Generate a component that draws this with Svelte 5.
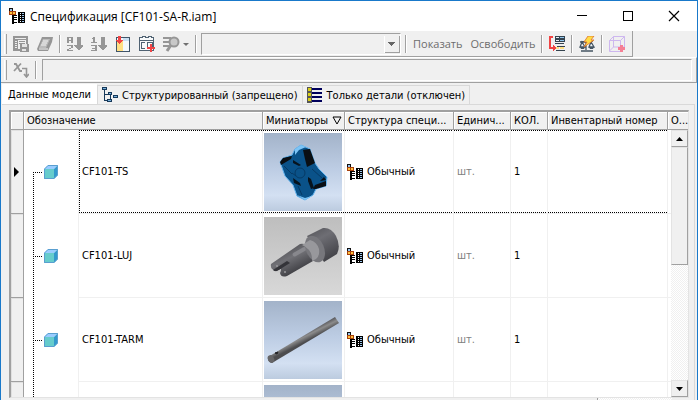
<script lang="ts">
interface Column {
	id: string;
	label: string;
	span?: number;
	sorted?: boolean;
}

interface Part {
	name: string;
	thumb: 'plate' | 'shaft' | 'rod' | 'blank';
	structure: string;
	unit: string;
	qty: string;
}

const columns: Column[] = [
	{ id: 'name', label: 'Обозначение', span: 2 },
	{ id: 'thumb', label: 'Миниатюры', sorted: true },
	{ id: 'structure', label: 'Структура специ...' },
	{ id: 'unit', label: 'Единич...' },
	{ id: 'qty', label: 'КОЛ.' },
	{ id: 'stock', label: 'Инвентарный номер' },
	{ id: 'desc', label: 'О...' },
];

const parts: Part[] = [
	{ name: 'CF101-TS', thumb: 'plate', structure: 'Обычный', unit: 'шт.', qty: '1' },
	{ name: 'CF101-LUJ', thumb: 'shaft', structure: 'Обычный', unit: 'шт.', qty: '1' },
	{ name: 'CF101-TARM', thumb: 'rod', structure: 'Обычный', unit: 'шт.', qty: '1' },
	{ name: '', thumb: 'blank', structure: '', unit: '', qty: '' },
];

let activeTab = $state('model');
let selected = $state(0);
</script>

{#snippet bomIcon()}
	<svg class="icon" viewBox="0 0 16 16" shape-rendering="crispEdges" aria-hidden="true">
		<rect width="4" height="4" fill="#111" />
		<rect x="1" y="1" width="2" height="2" fill="#9cc6ee" />
		<rect y="3" width="7" height="4" fill="#a8400c" />
		<rect x="1" y="4" width="5" height="2" fill="#ffc23c" />
		<rect x="3" y="4" width="1" height="2" fill="#a8400c" />
		<path d="M3 7h2v9h-2zM4 7h4v1h-4zM4 9h4v1h-4zM4 11h4v1h-4zM4 14h4v1h-4z" fill="#000" />
		<rect x="9" y="4" width="7" height="11" fill="#000" />
		<path d="M11 5h1v1h-1zM11 7h1v1h-1zM11 9h1v1h-1zM11 11h1v1h-1zM11 13h1v1h-1z" fill="#fff" />
		<path d="M13 5h2v1h-2zM13 7h2v1h-2zM13 9h2v1h-2zM13 11h2v1h-2zM13 13h2v1h-2z" fill="#9cc6ee" />
	</svg>
{/snippet}

{#snippet cubeIcon()}
	<svg class="cube" viewBox="0 0 14 14" aria-hidden="true">
		<path d="M0 4L4 0h10l-4 4z" fill="#99ccff" />
		<path d="M10 4l4-4v10l-4 4z" fill="#3399cc" />
		<rect x="0" y="4" width="10" height="10" fill="#66cccc" />
		<path d="M.5 4v9.500h9.500L13.500 10V.5H4L.5 4" fill="none" stroke="#5a9fd0" />
	</svg>
{/snippet}

{#snippet thumbnail(kind: Part['thumb'])}
	<svg class="thumb" viewBox="0 0 78 78" aria-hidden="true">
		<defs>
			<linearGradient id="sky" x1="0" y1="0" x2="0" y2="1">
				<stop offset="0" stop-color="#a3b3c9" />
				<stop offset=".45" stop-color="#bccce3" />
				<stop offset=".8" stop-color="#d3e0f2" />
				<stop offset="1" stop-color="#bccbdf" />
			</linearGradient>
			<linearGradient id="fog" x1="0" y1="0" x2="0" y2="1">
				<stop offset="0" stop-color="#bebebe" />
				<stop offset="1" stop-color="#d8d8d8" />
			</linearGradient>
			<linearGradient id="steel" gradientUnits="userSpaceOnUse" x1="50" y1="12" x2="68" y2="44">
				<stop offset="0" stop-color="#5a5a5f" />
				<stop offset=".3" stop-color="#6e6e74" />
				<stop offset="1" stop-color="#3e3e43" />
			</linearGradient>
			<linearGradient id="stem" gradientUnits="userSpaceOnUse" x1="26" y1="32" x2="36" y2="52">
				<stop offset="0" stop-color="#5c5c61" />
				<stop offset=".35" stop-color="#717176" />
				<stop offset="1" stop-color="#434348" />
			</linearGradient>
			<linearGradient id="bar" gradientUnits="userSpaceOnUse" x1="35" y1="34" x2="39" y2="42">
				<stop offset="0" stop-color="#56565a" />
				<stop offset=".45" stop-color="#8c8c8c" />
				<stop offset="1" stop-color="#4c4c4e" />
			</linearGradient>
		</defs>
		<rect width="78" height="78" fill={kind === 'shaft' ? 'url(#fog)' : 'url(#sky)'} />
		{#if kind === 'plate'}
			<path
				d="M16 29l3-4 9-3 3-6 6-4 9 4 5 14 4 6 8 8-1 9-10 3-3 6-8 5-8-4-4-11-8-9z"
				fill="#0a5289"
				stroke="#64b4ee"
				stroke-width="1"
			/>
			<path d="M31 16l6-4 5 2-7 3-4 5zM33 62l8 5 7-4-7 2z" fill="#7cc4f6" />
			<path d="M39 17l7-1 5 14-8 4-2-8z" fill="#0a0f14" />
			<path d="M16 29l3-4 9-2-1 3-10 6zM49 56l2-4 11-4v5l-10 3zM60 44l2 3-6 1z" fill="#0a0f14" />
			<path d="M29 27l8 5-2 1-6-3zM29 45l7 5 1 3-7-3zM44 44l3 2 3 9-3 1-3-8z" fill="#07131d" />
			<circle cx="36" cy="40" r="5" fill="none" stroke="#063a65" stroke-width="1" />
			<path d="M20 33l8 8M34 53l4 9M48 36l10 9M28 40l4 3" stroke="#063a65" stroke-width="1" />
		{:else if kind === 'shaft'}
			<path d="M7 47L36 27q7-1 11 5t2 12L23 59q-6 2-7-3l1-4-5 2q-6-1-5-7z" fill="url(#stem)" />
			<path d="M9 53l14-9 3 2-8 5-4 3q-3 1-5-1z" fill="#343439" />
			<path d="M11 55l6-3-1 4z" fill="#cacaca" />
			<rect x="28" y="33" width="15" height="4" rx="2" transform="rotate(-29 35 35)" fill="#88888d" />
			<circle cx="13" cy="49" r="1" fill="#9a9a9d" />
			<circle cx="21" cy="55" r="1" fill="#9a9a9d" />
			<path d="M43 19L59 11q8-1 13 8 5 10 1 18L60 45z" fill="url(#steel)" />
			<ellipse cx="51" cy="32" rx="9" ry="14" transform="rotate(-24 51 32)" fill="#77777c" />
			<path d="M38 28l8-5q7 2 9 9 1 7-3 10l-4 2q1-11-10-16z" fill="#98989c" />
		{:else if kind === 'rod'}
			<path d="M4 56L71 16l4 6L8 62q-5-1-4-6z" fill="url(#bar)" />
			<ellipse cx="7" cy="58" rx="3" ry="4" transform="rotate(-30 7 58)" fill="#666668" />
			<path d="M11 52l3-1-1 2z" fill="#242426" stroke="#242426" />
		{/if}
	</svg>
{/snippet}

<div class="window">
	<header class="titlebar">
		{@render bomIcon()}
		<h1>Спецификация [CF101-SA-R.iam]</h1>
		<button class="caption" aria-label="Свернуть">
			<svg viewBox="0 0 12 12" shape-rendering="crispEdges"><path d="M1 5h10v1h-10z" /></svg>
		</button>
		<button class="caption" aria-label="Развернуть">
			<svg viewBox="0 0 12 12"><rect x="1.500" y="1.500" width="9" height="9" fill="none" stroke="#000" /></svg>
		</button>
		<button class="caption" aria-label="Закрыть">
			<svg viewBox="0 0 12 12"><path d="M1 1l10 10M11 1L1 11" stroke="#000" stroke-width="1.200" /></svg>
		</button>
	</header>

	<div class="toolbar-row">
		<div class="toolbar" role="toolbar" aria-label="Спецификация">
			<span class="grip"></span>
			<button class="tool" disabled aria-label="Экспорт">
				<svg class="icon" viewBox="0 0 16 16" shape-rendering="crispEdges">
					<path d="M0 0h15v8h-2v-4h-12v9h6v2h-7z" fill="#969696" />
					<path d="M1 4h4v9h-4z" fill="#969696" />
					<path d="M2 5h2v1h-2zM2 7h2v1h-2zM2 9h2v1h-2zM2 11h2v1h-2zM2 2h11v1h-11z" fill="#eee" />
					<path d="M6 5h6v1h-6zM6 7h6v1h-6zM7 8h9v8h-9z" fill="#969696" />
					<path d="M9 8h5v3h-5zM9 13h4v2h-4z" fill="#e4e4e4" />
				</svg>
			</button>
			<button class="tool" disabled aria-label="Параметры">
				<svg class="icon" viewBox="0 0 16 16">
					<path d="M5 1h11l-1 5-4 9H1l-1-2z" fill="#969696" />
					<path d="M6 3h7l-4 9H2z" fill="#bcbcbc" />
					<path d="M6 5h5M5 7h5M4 9h5M2 13h9" stroke="#f4f4f4" />
				</svg>
			</button>
			<span class="divider"></span>
			<button class="tool" disabled aria-label="Сортировка">
				<svg class="icon" viewBox="0 0 16 16" shape-rendering="crispEdges">
					<path d="M1 1h4v1h-4zM0 1h2v6h-2zM4 1h2v6h-2zM1 4h4v1h-4zM0 9h6v1h-6zM4 10h2v2h-2zM2 12h2v1h-2zM0 13h2v2h-2zM0 14h6v1h-6z" fill="#969696" />
					<path d="M10 1h4v8h3l-5 6-5-6h3z" fill="#969696" />
				</svg>
			</button>
			<button class="tool" disabled aria-label="Перенумеровать">
				<svg class="icon" viewBox="0 0 16 16" shape-rendering="crispEdges">
					<path d="M2 1h2v5h-2zM1 2h2v1h-2zM0 6h6v1h-6zM0 9h6v1h-6zM4 9h2v6h-2zM1 12h4v1h-4zM0 14h6v1h-6z" fill="#969696" />
					<path d="M10 1h4v8h3l-5 6-5-6h3z" fill="#969696" />
				</svg>
			</button>
			<button class="tool" aria-label="Выбор столбцов">
				<svg class="icon" viewBox="0 0 16 16" shape-rendering="crispEdges">
					<rect x="1.500" y="1.500" width="13" height="14" fill="#f5f8fb" stroke="#405568" />
					<path d="M2 5h6v10h-6z" fill="#ffdf83" />
					<path d="M8 2h6v3h-6z" fill="#c9dff2" />
					<path d="M3 0h3v4h2l-3.500 4L0 4h3z" fill="#f04444" />
				</svg>
			</button>
			<button class="tool" aria-label="Добавить пользовательские свойства">
				<svg class="icon" viewBox="0 0 16 16" shape-rendering="crispEdges">
					<path d="M.5 1.500h3v-1h3v1h3v-1h3v1h2v13H.5z" fill="#f7f9fa" stroke="#506272" />
					<path d="M1 4h13M5.500 6.500h-3v6h3M8.500 6.500h5v6h-5z" fill="none" stroke="#506272" />
					<path d="M11 8h2v3h3v2h-3v3h-2v-3H8v-2h3z" fill="#f04444" />
				</svg>
			</button>
			<button class="tool search" disabled aria-label="Найти">
				<svg class="wide-icon" viewBox="0 0 26 16">
					<path d="M0 2h8M0 6h6M0 10h6" stroke="#969696" stroke-width="2" />
					<circle cx="11" cy="6" r="4.500" fill="#c8c8c8" stroke="#969696" stroke-width="2" />
					<path d="M8 9l-4 6" stroke="#969696" stroke-width="3" />
					<path d="M20 7h6l-3 3z" fill="#707070" />
				</svg>
			</button>
			<span class="divider"></span>
			<select class="combo" disabled aria-label="Представление"><option></option></select>
			<span class="divider"></span>
			<button class="text-tool" disabled>Показать</button>
			<button class="text-tool" disabled>Освободить</button>
			<span class="divider"></span>
			<button class="tool" aria-label="Вставить строку">
				<svg class="icon" viewBox="0 0 16 16" shape-rendering="crispEdges">
					<path d="M0 0h4v2h-2v9h2v-2l3 3-3 3v-2H0z" fill="#f04444" />
					<path d="M6 0h10v6h-10zM6 7h9v1h-9zM8 10h8v1h-8zM7 14h9v1h-9z" fill="#34434f" />
					<path d="M7 1h3v1h-3zM7 4h3v1h-3z" fill="#e8eef4" />
					<path d="M11 1h4v1h-4zM11 4h4v1h-4z" fill="#92c7ee" />
					<path d="M7 11h3v2h-3zM11 11h4v2h-4z" fill="#ffdf83" />
				</svg>
			</button>
			<span class="divider"></span>
			<button class="tool" aria-label="Обновить массу">
				<svg class="icon" viewBox="0 0 16 16">
					<path d="M1 6l13-1M7 5v9M2 15h12M3 6l-2 5h5zM12 6l-2 5h5z" fill="#eef3f6" stroke="#455563" stroke-width="1.300" />
					<path d="M1 11h5l-1 2H2zM10 11h5l-1 2h-3z" fill="#455563" />
					<path d="M9 0h6l-3 4h3L5 11l3-5H5z" fill="#ffdd45" stroke="#dd702c" stroke-width=".8" />
				</svg>
			</button>
			<span class="divider"></span>
			<button class="tool" aria-label="Создать виртуальный компонент">
				<svg class="icon" viewBox="0 0 16 16">
					<path d="M.5 4.500h11v11H.5zM.5 4.500l4-4h11v11l-4 4M11.500 4.500l4-4M4.500.5v10.500h11M4.500 11l-4 4" fill="none" stroke="#cdb7ef" />
					<path d="M11 9h3v2h2v3h-2v2h-3v-2H9v-3h2z" fill="#f58095" />
				</svg>
			</button>
		</div>
	</div>

	<div class="formula-bar">
		<span class="grip"></span>
		<svg class="icon formula-icon" viewBox="0 0 16 16" aria-hidden="true">
			<path d="M1 2h2l4 7h2M8 1.500L1 9" fill="none" stroke="#969696" stroke-width="1.800" />
			<path d="M9 6.500h4.500V14M11 12l2.500 3 2.500-3" fill="none" stroke="#969696" stroke-width="1.600" />
		</svg>
		<span class="divider"></span>
		<input disabled aria-label="Формула" />
	</div>

	<div class="tabs" role="tablist">
		<button
			role="tab"
			class="tab"
			class:active={activeTab === 'model'}
			aria-selected={activeTab === 'model'}
			onclick={() => (activeTab = 'model')}
		>
			Данные модели
		</button>
		<button role="tab" class="tab" aria-selected="false">
			<svg class="icon" viewBox="0 0 16 16" shape-rendering="crispEdges" aria-hidden="true">
				<path d="M2.500 2v12M3 7.500h5M3 13.500h3M8.500 8v5" fill="none" stroke="#17395a" />
				<path d="M0 0h5v3h-5zM6 5h4v3h-4zM11 8h5v3h-5zM5 12h5v3h-5z" fill="#17395a" />
				<path d="M1 1h3v1h-3zM7 6h2v1h-2zM12 9h3v1h-3zM6 13h3v1h-3z" fill="#77b1dd" />
			</svg>
			Структурированный (запрещено)
		</button>
		<button role="tab" class="tab" aria-selected="false">
			<svg class="icon" viewBox="0 0 16 16" shape-rendering="crispEdges" aria-hidden="true">
				<path d="M0 0h5v16h-5z" fill="#555" />
				<path d="M1 1h3v3h-3zM1 6h3v3h-3zM1 11h3v3h-3z" fill="#d8cf16" />
				<path d="M5 1h10v2h-10zM5 5h10v2h-10zM5 9h10v2h-10zM5 13h10v2h-10z" fill="#00005c" />
			</svg>
			Только детали (отключен)
		</button>
	</div>

	<main class="panel">
		<div class="grid">
			<table>
				<colgroup>
					<col class="w-select" />
					<col class="w-tree" />
					<col />
					<col class="w-thumb" />
					<col class="w-structure" />
					<col class="w-unit" />
					<col class="w-qty" />
					<col class="w-stock" />
					<col class="w-desc" />
				</colgroup>
				<thead>
					<tr>
						<th class="select-cell" aria-label="Строка"></th>
						{#each columns as column (column.id)}
							<th scope="col" colspan={column.span ?? 1}>
								<span class="head">
									{column.label}
									{#if column.sorted}
										<svg class="sort" viewBox="0 0 10 9" aria-hidden="true">
											<path d="M1 1h8L5 8z" fill="none" stroke="#000" />
										</svg>
									{/if}
								</span>
							</th>
						{/each}
					</tr>
				</thead>
				<tbody>
					{#each parts as part, i}
						<tr class:selected={i === selected} onclick={() => (selected = i)}>
							<td class="select-cell">
								{#if i === selected}
									<svg class="marker" viewBox="0 0 5 10" aria-hidden="true"><path d="M0 0l5 5-5 5z" /></svg>
								{/if}
							</td>
							<td class="tree" class:first={i === 0}>
								{#if part.name}
									<span class="node"><span class="branch"></span>{@render cubeIcon()}</span>
								{/if}
							</td>
							<td class="mark">{part.name}</td>
							<td class="mark picture">{@render thumbnail(part.thumb)}</td>
							<td class="mark with-icon">
								{#if part.structure}
									<span class="structure">{@render bomIcon()}{part.structure}</span>
								{/if}
							</td>
							<td class="mark muted">{part.unit}</td>
							<td class="mark">{part.qty}</td>
							<td class="mark"></td>
							<td></td>
						</tr>
					{/each}
				</tbody>
			</table>

			<div class="scrollbar">
				<button aria-label="Вверх"><svg viewBox="0 0 7 4"><path d="M0 4l3.500-4L7 4z" /></svg></button>
				<div class="handle"></div>
				<div class="track"></div>
				<button aria-label="Вниз"><svg viewBox="0 0 7 4"><path d="M0 0h7L3.500 4z" /></svg></button>
			</div>
		</div>
		<div class="bottom-scroll"><span class="bottom-handle"></span><span class="bottom-track"></span></div>
	</main>
</div>

<style>
	:global(body) {
		margin: 0;
	}

	.window {
		display: flex;
		flex-direction: column;
		box-sizing: border-box;
		height: 100vh;
		overflow: hidden;
		border: 1px solid #1979ca;
		border-bottom: 0;
		background: #f0f0f0;
		color: #000;
		font-family: 'DejaVu Sans Condensed', 'DejaVu Sans', sans-serif;
		font-size: 11px;
	}

	button,
	input,
	select {
		margin: 0;
		padding: 0;
		border: 0;
		border-radius: 0;
		background: none;
		color: inherit;
		font: inherit;
	}

	svg {
		display: block;
		flex: none;
	}

	.icon {
		width: 16px;
		height: 16px;
	}

	/* Title bar */
	.titlebar {
		display: flex;
		flex: none;
		align-items: center;
		height: 30px;
		padding-left: 8px;
		background: #fff;
	}

	h1 {
		flex: 1;
		margin: 0 0 0 5px;
		font-family: 'Open Sans', 'Noto Sans', sans-serif;
		font-size: 12px;
		font-weight: 400;
		white-space: nowrap;
	}

	.caption {
		display: flex;
		align-items: center;
		justify-content: center;
		width: 46px;
		height: 28px;
	}

	.caption svg {
		width: 12px;
		height: 12px;
	}

	/* Toolbars */
	.toolbar-row {
		display: flex;
		flex: none;
	}

	.toolbar {
		display: flex;
		align-items: center;
		box-sizing: border-box;
		height: 26px;
		padding-right: 3px;
		border-right: 1px solid #a0a0a0;
		border-bottom: 1px solid #a0a0a0;
	}

	.grip {
		flex: none;
		width: 1px;
		height: 20px;
		margin: 0 2px 0 3px;
		border-left: 1px solid #fff;
		border-right: 1px solid #a0a0a0;
	}

	.divider {
		flex: none;
		width: 1px;
		height: 18px;
		margin: 0 2px;
		border-right: 1px solid #fff;
		background: #a0a0a0;
	}

	.tool {
		display: flex;
		flex: none;
		align-items: center;
		justify-content: center;
		width: 24px;
		height: 22px;
	}

	.tool.search {
		width: 34px;
	}

	.wide-icon {
		width: 26px;
		height: 16px;
	}

	.combo {
		appearance: none;
		box-sizing: border-box;
		width: 200px;
		height: 22px;
		margin: 0 2px;
		border: 1px solid #a0a0a0;
		border-right-color: #fff;
		border-bottom-color: #fff;
		opacity: 1;
		background:
			conic-gradient(from 315deg at 50% 100%, #666 90deg, transparent 0) right 5px top 8px / 7px 4px no-repeat,
			linear-gradient(#a0a0a0, #a0a0a0) right 0 top 2px / 1px 17px no-repeat,
			linear-gradient(#a0a0a0, #a0a0a0) right 0 top 18px / 15px 1px no-repeat,
			linear-gradient(#fff, #fff) right 15px top 2px / 1px 17px no-repeat;
	}

	.text-tool {
		padding: 0 4px;
		color: #6d6d6d;
		font-family: 'Open Sans', 'Noto Sans', sans-serif;
		font-size: 11px;
	}

	.formula-bar {
		display: flex;
		flex: none;
		align-items: center;
		box-sizing: border-box;
		height: 26px;
		border-top: 1px solid #fff;
		border-right: 1px solid #a0a0a0;
		border-bottom: 1px solid #a0a0a0;
	}

	.formula-icon {
		margin: 0 4px;
	}

	.formula-bar input {
		flex: 1;
		box-sizing: border-box;
		min-width: 0;
		height: 22px;
		margin: 0 4px 0 3px;
		border: 1px solid #a0a0a0;
		border-right-color: #fff;
		border-bottom-color: #fff;
	}

	/* Tabs */
	.tabs {
		display: flex;
		flex: none;
		align-items: flex-end;
		height: 21px;
		padding-left: 1px;
	}

	.tab {
		display: flex;
		align-items: center;
		gap: 4px;
		box-sizing: border-box;
		height: 19px;
		padding: 0 4px;
		border-top: 1px solid #d9d9d9;
		border-right: 1px solid #d9d9d9;
		white-space: nowrap;
	}

	.tab.active {
		height: 20px;
		padding: 0 6px;
		border-top-color: #fff;
		background: #fff;
	}

	/* Grid */
	.panel {
		display: flex;
		flex: 1;
		flex-direction: column;
		min-height: 0;
		margin: 0 2px 0 1px;
		padding: 5px 5px 0 7px;
		border-top: 1px solid #d9d9d9;
		border-right: 1px solid #d9d9d9;
	}

	.grid {
		position: relative;
		flex: 1;
		min-height: 0;
		overflow: hidden;
		border: 2px solid #a0a0a0;
		border-right: 1px solid #e3e3e3;
		border-bottom: 1px solid #e3e3e3;
		background: #fff;
	}

	table {
		width: 100%;
		border-spacing: 0;
		table-layout: fixed;
	}

	.w-select {
		width: 13px;
	}

	.w-tree {
		width: 55px;
	}

	.w-thumb {
		width: 82px;
	}

	.w-structure {
		width: 109px;
	}

	.w-unit {
		width: 57px;
	}

	.w-qty {
		width: 37px;
	}

	.w-stock {
		width: 120px;
	}

	.w-desc {
		width: 20px;
	}

	th {
		height: 17px;
		padding: 0 0 0 3px;
		overflow: hidden;
		border-right: 1px solid #a0a0a0;
		border-bottom: 1px solid #a0a0a0;
		background: #f0f0f0;
		box-shadow: inset 1px 1px #fff;
		font-weight: 400;
		text-align: left;
		white-space: nowrap;
	}

	th:last-child {
		border-right: 0;
	}

	.head {
		display: flex;
		align-items: center;
		gap: 4px;
	}

	.sort {
		width: 10px;
		height: 9px;
	}

	td {
		height: 83px;
		padding: 0 0 0 3px;
		border-right: 1px solid #f0f0f0;
		border-bottom: 1px solid #f0f0f0;
		white-space: nowrap;
	}

	td.select-cell {
		padding: 0 0 0 3px;
		border-right-color: #a0a0a0;
		border-bottom-color: #a0a0a0;
		background: #f0f0f0;
		box-shadow: inset 1px 1px #e0e0e0;
	}

	.marker {
		width: 5px;
		height: 10px;
	}

	td.tree {
		padding: 0 0 0 9px;
		border-bottom: 0;
		background: repeating-linear-gradient(#000 0 1px, transparent 1px 2px) 9px 0 / 1px 100% no-repeat;
	}

	td.tree.first {
		background-position: 9px 42px;
	}

	.node {
		display: flex;
		align-items: center;
		gap: 2px;
	}

	.branch {
		width: 9px;
		height: 1px;
		background: repeating-linear-gradient(90deg, #000 0 1px, transparent 1px 2px);
	}

	.cube {
		width: 14px;
		height: 14px;
	}

	/* Dotted focus frame round the selected row */
	.selected .mark {
		background:
			repeating-linear-gradient(90deg, #000 0 1px, transparent 1px 2px) 0 0 / 100% 1px no-repeat,
			repeating-linear-gradient(90deg, #000 0 1px, transparent 1px 2px) 0 100% / 100% 1px no-repeat;
	}

	.selected .tree + .mark {
		background:
			repeating-linear-gradient(90deg, #000 0 1px, transparent 1px 2px) 0 0 / 100% 1px no-repeat,
			repeating-linear-gradient(90deg, #000 0 1px, transparent 1px 2px) 0 100% / 100% 1px no-repeat,
			repeating-linear-gradient(#000 0 1px, transparent 1px 2px) 0 0 / 1px 100% no-repeat;
	}

	td.picture {
		padding: 0 0 0 1px;
	}

	td.with-icon {
		padding: 0 0 0 2px;
	}

	.thumb {
		width: 78px;
		height: 78px;
	}

	.structure {
		display: flex;
		align-items: center;
		gap: 4px;
	}

	td.muted {
		color: #808080;
	}

	/* Scroll bars */
	.scrollbar {
		position: absolute;
		top: 18px;
		right: 0;
		bottom: 0;
		display: flex;
		flex-direction: column;
		width: 17px;
		background: #fff;
	}

	.scrollbar button,
	.handle {
		box-sizing: border-box;
		border: 1px solid #e3e3e3;
		border-right-color: #a0a0a0;
		border-bottom-color: #a0a0a0;
		background: #f0f0f0;
	}

	.scrollbar button {
		display: flex;
		flex: none;
		align-items: center;
		justify-content: center;
		height: 17px;
	}

	.scrollbar button svg {
		width: 7px;
		height: 4px;
	}

	.handle,
	.track {
		flex: 1;
	}

	.track,
	.bottom-track {
		background: repeating-conic-gradient(#fff 0 25%, #f0f0f0 0 50%) 0 0 / 2px 2px;
	}

	.bottom-scroll {
		display: flex;
		flex: none;
		height: 2px;
		padding-right: 17px;
	}

	.bottom-handle {
		flex: 8;
		border-right: 1px solid #a0a0a0;
	}

	.bottom-track {
		flex: 1;
	}
</style>
